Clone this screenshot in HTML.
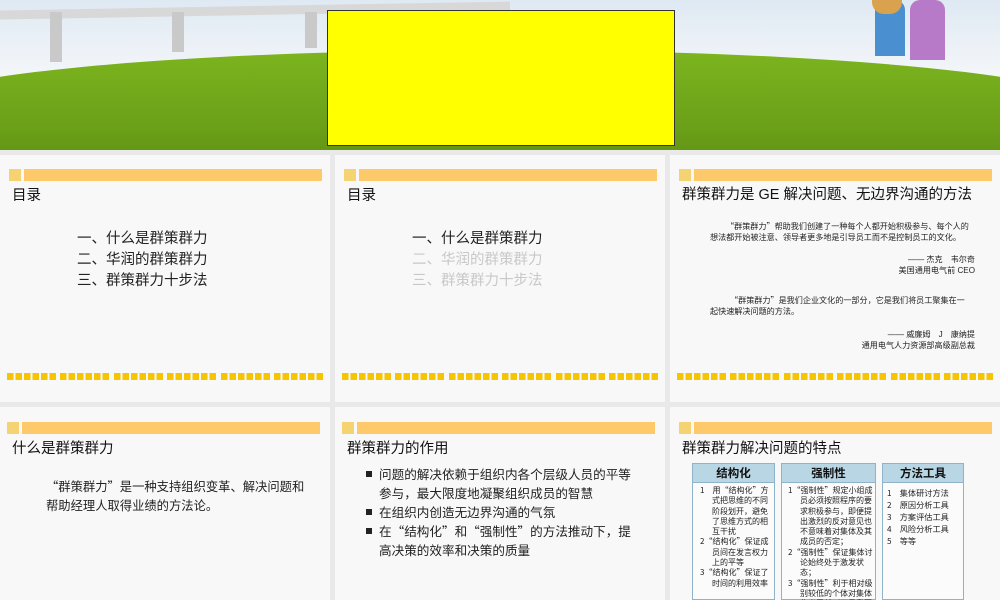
<!DOCTYPE html>
<html><head><meta charset="utf-8"><style>
*{margin:0;padding:0;box-sizing:border-box}
body{width:1000px;height:600px;overflow:hidden;background:#e9e9e9;font-family:"Liberation Sans","Noto Sans CJK SC",sans-serif;position:relative}
.cj{font-family:"Noto Sans CJK SC","Liberation Sans",sans-serif}
.ban{position:absolute;left:0;top:0;width:1000px;height:150px;background:linear-gradient(#dfe9f3,#f3f6f9 50%);overflow:hidden}
.hill{position:absolute;left:-100px;top:50px;width:1200px;height:200px;border-radius:50% 50% 0 0/30% 30% 0 0;background:linear-gradient(#7cb51f,#6a9f18 40%,#547f10 80%)}
.yel{position:absolute;left:327px;top:10px;width:348px;height:136px;background:#ffff00;border:1px solid #333}
.s{position:absolute;background:#f8f8f8;width:330px;overflow:hidden}
.hb{position:absolute;left:9px;top:14px;width:313px;height:12px}
.hb i{position:absolute;left:0;top:0;width:12px;height:12px;background:#f5d373}
.hb b{position:absolute;left:15px;top:0;right:0;height:12px;background:#fdc96a}
.t{position:absolute;left:12px;font-size:14.5px;color:#111}
.dots{position:absolute;left:7px;top:218px;width:316px;height:7px;display:flex;justify-content:space-between}
.dots span{width:49px;height:7px;background:repeating-linear-gradient(90deg,#f6c500 0 6.3px,transparent 6.3px 8.5px)}
.toc{position:absolute;left:77px;top:74px;font-size:14.5px;line-height:21px;color:#222}
.g{color:#c8c8c8}
.q{position:absolute;font-size:8.1px;color:#222;line-height:11px}
.box{position:absolute;top:56px;border:1px solid #8fb3c8;background:#fbfbfb;height:137px}
.box h4{background:#b9d6e4;border-bottom:1px solid #8fb3c8;height:19px;text-align:center;font-size:11.5px;line-height:19px;color:#111}
.li{font-size:8px;line-height:10.3px;color:#222;padding-left:14px;text-indent:-12px}
.bl{padding-left:13px;text-indent:-13px}
.bl b{display:inline-block;width:6px;height:6px;background:#222;margin-right:7px;vertical-align:2px;text-indent:0}
</style></head><body>
<div class="ban">
 <div style="position:absolute;left:0;top:6px;width:510px;height:9px;background:#d8d8d8;transform:skewY(-1deg)"></div>
 <div style="position:absolute;left:50px;top:12px;width:12px;height:50px;background:#c9c9c9"></div>
 <div style="position:absolute;left:172px;top:12px;width:12px;height:40px;background:#c9c9c9"></div>
 <div style="position:absolute;left:305px;top:12px;width:12px;height:36px;background:#c9c9c9"></div>
 <div class="hill"></div>
 <div style="position:absolute;left:875px;top:0;width:30px;height:56px;border-radius:10px 10px 0 0;background:#4a8fcf"></div>
 <div style="position:absolute;left:910px;top:0;width:35px;height:60px;border-radius:10px 10px 0 0;background:#b67ac8"></div>
 <div style="position:absolute;left:872px;top:0;width:30px;height:14px;background:#d9a24f;border-radius:0 0 12px 12px"></div>
 <div class="yel"></div>
</div>

<div class="s" style="left:0;top:155px;height:247px">
 <div class="hb"><i></i><b></b></div>
 <div class="t" style="top:29px">目录</div>
 <div class="toc">一、什么是群策群力<br>二、华润的群策群力<br>三、群策群力十步法</div>
 <div class="dots"><span></span><span></span><span></span><span></span><span></span><span></span></div>
</div>
<div class="s" style="left:335px;top:155px;height:247px">
 <div class="hb"><i></i><b></b></div>
 <div class="t" style="top:29px">目录</div>
 <div class="toc">一、什么是群策群力<br><span class="g">二、华润的群策群力<br>三、群策群力十步法</span></div>
 <div class="dots"><span></span><span></span><span></span><span></span><span></span><span></span></div>
</div>
<div class="s" style="left:670px;top:155px;height:247px">
 <div class="hb"><i></i><b></b></div>
 <div class="t" style="top:28px">群策群力是 GE 解决问题、无边界沟通的方法</div>
 <div class="q cj" style="left:40px;top:66px;width:266px;text-indent:16px">“群策群力”帮助我们创建了一种每个人都开始积极参与、每个人的想法都开始被注意、领导者更多地是引导员工而不是控制员工的文化。</div>
 <div class="q" style="right:25px;top:99px;text-align:right">—— 杰克　韦尔奇<br>美国通用电气前 CEO</div>
 <div class="q cj" style="left:40px;top:140px;width:262px;text-indent:20px">“群策群力”是我们企业文化的一部分，它是我们将员工聚集在一起快速解决问题的方法。</div>
 <div class="q" style="right:25px;top:174px;text-align:right">—— 威廉姆　J　康纳提<br>通用电气人力资源部高级副总裁</div>
 <div class="dots"><span></span><span></span><span></span><span></span><span></span><span></span></div>
</div>

<div class="s" style="left:0;top:407px;height:193px">
 <div class="hb" style="left:7px;top:15px"><i></i><b></b></div>
 <div class="t" style="top:30px">什么是群策群力</div>
 <div class="cj" style="position:absolute;left:46px;top:70px;font-size:12.3px;line-height:19px;color:#222;width:262px">“群策群力”是一种支持组织变革、解决问题和帮助经理人取得业绩的方法论。</div>
</div>
<div class="s" style="left:335px;top:407px;height:193px">
 <div class="hb" style="left:7px;top:15px"><i></i><b></b></div>
 <div class="t" style="top:30px">群策群力的作用</div>
 <div class="cj" style="position:absolute;left:31px;top:57px;font-size:12.6px;line-height:19px;color:#222;width:275px">
  <div class="bl"><b></b>问题的解决依赖于组织内各个层级人员的平等参与，最大限度地凝聚组织成员的智慧</div>
  <div class="bl"><b></b>在组织内创造无边界沟通的气氛</div>
  <div class="bl"><b></b>在“结构化”和“强制性”的方法推动下，提高决策的效率和决策的质量</div>
 </div>
</div>
<div class="s" style="left:670px;top:407px;height:193px">
 <div class="hb" style="left:9px;top:15px"><i></i><b></b></div>
 <div class="t" style="top:30px">群策群力解决问题的特点</div>
 <div class="box cj" style="left:22px;width:83px"><h4>结构化</h4><div style="padding:3px 2px 0 5px">
  <div class="li">1　用“结构化”方式把思维的不同阶段划开，避免了思维方式的相互干扰</div>
  <div class="li">2“结构化”保证成员间在发言权力上的平等</div>
  <div class="li">3“结构化”保证了时间的利用效率</div></div></div>
 <div class="box cj" style="left:111px;width:95px"><h4>强制性</h4><div style="padding:3px 1px 0 4px">
  <div class="li">1“强制性”规定小组成员必须按照程序的要求积极参与，即便提出激烈的反对意见也不意味着对集体及其成员的否定；</div>
  <div class="li">2“强制性”保证集体讨论始终处于激发状态；</div>
  <div class="li">3“强制性”利于相对级别较低的个体对集体作出贡献（不是我要否定谁，规则如此）。</div></div></div>
 <div class="box cj" style="left:212px;width:82px"><h4>方法工具</h4><div style="padding:4px 4px 0 4px;font-size:8.2px;line-height:12px;color:#222">1　集体研讨方法<br>2　原因分析工具<br>3　方案评估工具<br>4　风险分析工具<br>5　等等</div></div>
</div>
</body></html>
